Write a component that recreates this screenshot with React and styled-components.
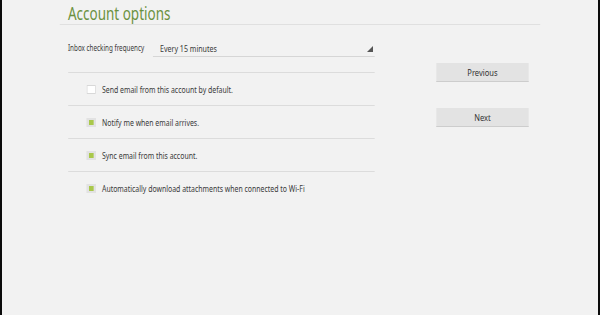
import styled, { createGlobalStyle } from "styled-components"

// the reference is a tablet screen squeezed sideways: the stage is laid out
// wider and squeezed back with scaleX, so text keeps its height
const SQUEEZE = 0.77

const Global = createGlobalStyle`
    html, body {
        margin: 0;
        padding: 0;
        background: #f2f2f2;
    }
    * {
        box-sizing: border-box;
    }
`

const Screen = styled.div`
    width: 600px;
    height: 315px;
    overflow: hidden;
    background: #f2f2f2;
    border-left: 2px solid #0b0b0b;
    border-right: 2px solid #0b0b0b;
    margin-right: 1px;
    font-family: "Noto Sans", "Open Sans", sans-serif;
    color: #3a3a3a;
`

const Stage = styled.div`
    width: ${596 / SQUEEZE}px;
    height: 315px;
    padding-left: ${58 / SQUEEZE}px;
    transform: scaleX(${SQUEEZE});
    transform-origin: left top;
`

const Header = styled.div`
    width: ${480 / SQUEEZE}px;
    height: 25px;
    padding-top: 2px;
    padding-left: ${8 / SQUEEZE}px;
    border-bottom: 1px solid #e0e0e0;
`

const Title = styled.h1`
    margin: 0;
    font-size: 17.5px;
    line-height: 22px;
    font-weight: 400;
    color: #6b913f;
`

const Body = styled.div`
    display: flex;
    align-items: flex-start;
    padding-left: ${8 / SQUEEZE}px;
    gap: ${61 / SQUEEZE}px;
`

const Options = styled.div`
    width: ${307 / SQUEEZE}px;
    display: flex;
    flex-direction: column;
`

const FreqRow = styled.div`
    display: flex;
    align-items: flex-start;
    height: 48px;
    padding-top: 15px;
    border-bottom: 1px solid #dcdcdc;
`

const FreqLabel = styled.span`
    width: ${85 / SQUEEZE}px;
    font-size: 8.2px;
    line-height: 16px;
`

const Spinner = styled.div`
    flex: 1;
    display: flex;
    align-items: center;
    justify-content: space-between;
    height: 17px;
    padding-left: ${7 / SQUEEZE}px;
    padding-right: ${2 / SQUEEZE}px;
    border-bottom: 1px solid #d6d6d6;
    font-size: 9.2px;
    svg {
        align-self: flex-end;
        margin-bottom: 4px;
    }
`

const CheckRow = styled.label`
    display: flex;
    align-items: center;
    height: 33px;
    padding-left: ${19 / SQUEEZE}px;
    border-bottom: 1px solid ${({ $last }) => ($last ? "transparent" : "#dcdcdc")};
    font-size: 9px;
`

const Box = styled.span`
    display: flex;
    align-items: center;
    justify-content: center;
    width: ${9 / SQUEEZE}px;
    height: 9px;
    margin-right: ${6 / SQUEEZE}px;
    background: ${({ $on }) => ($on ? "#e2e2e2" : "#ffffff")};
    border: 1px solid ${({ $on }) => ($on ? "#e2e2e2" : "#d8d8d8")};
    &::after {
        content: "";
        display: ${({ $on }) => ($on ? "block" : "none")};
        width: ${5 / SQUEEZE}px;
        height: 5px;
        background: #a9c84a;
    }
`

const Actions = styled.div`
    display: flex;
    flex-direction: column;
    gap: 26px;
    margin-top: 38px;
`

const Button = styled.button`
    width: ${93 / SQUEEZE}px;
    height: 19px;
    padding: 0;
    border: none;
    border-bottom: 1px solid #cdcdcd;
    border-radius: 0;
    background: #e3e3e3;
    color: #333;
    font-family: inherit;
    font-size: 9.8px;
`

const options = [
    { text: "Send email from this account by default.", on: false },
    { text: "Notify me when email arrives.", on: true },
    { text: "Sync email from this account.", on: true },
    { text: "Automatically download attachments when connected to Wi-Fi", on: true },
]

export default function App() {
    return (
        <>
            <Global />
            <Screen>
                <Stage>
                    <Header>
                        <Title>Account options</Title>
                    </Header>
                    <Body>
                        <Options>
                            <FreqRow>
                                <FreqLabel>Inbox checking frequency</FreqLabel>
                                <Spinner>
                                    <span>Every 15 minutes</span>
                                    <svg width={6 / SQUEEZE} height="6" viewBox="0 0 6 6" preserveAspectRatio="none">
                                        <polygon points="6,0 6,6 0,6" fill="#555" />
                                    </svg>
                                </Spinner>
                            </FreqRow>
                            {options.map((o, i) => (
                                <CheckRow key={o.text} $last={i === options.length - 1}>
                                    <Box $on={o.on} />
                                    {o.text}
                                </CheckRow>
                            ))}
                        </Options>
                        <Actions>
                            <Button>Previous</Button>
                            <Button>Next</Button>
                        </Actions>
                    </Body>
                </Stage>
            </Screen>
        </>
    )
}
